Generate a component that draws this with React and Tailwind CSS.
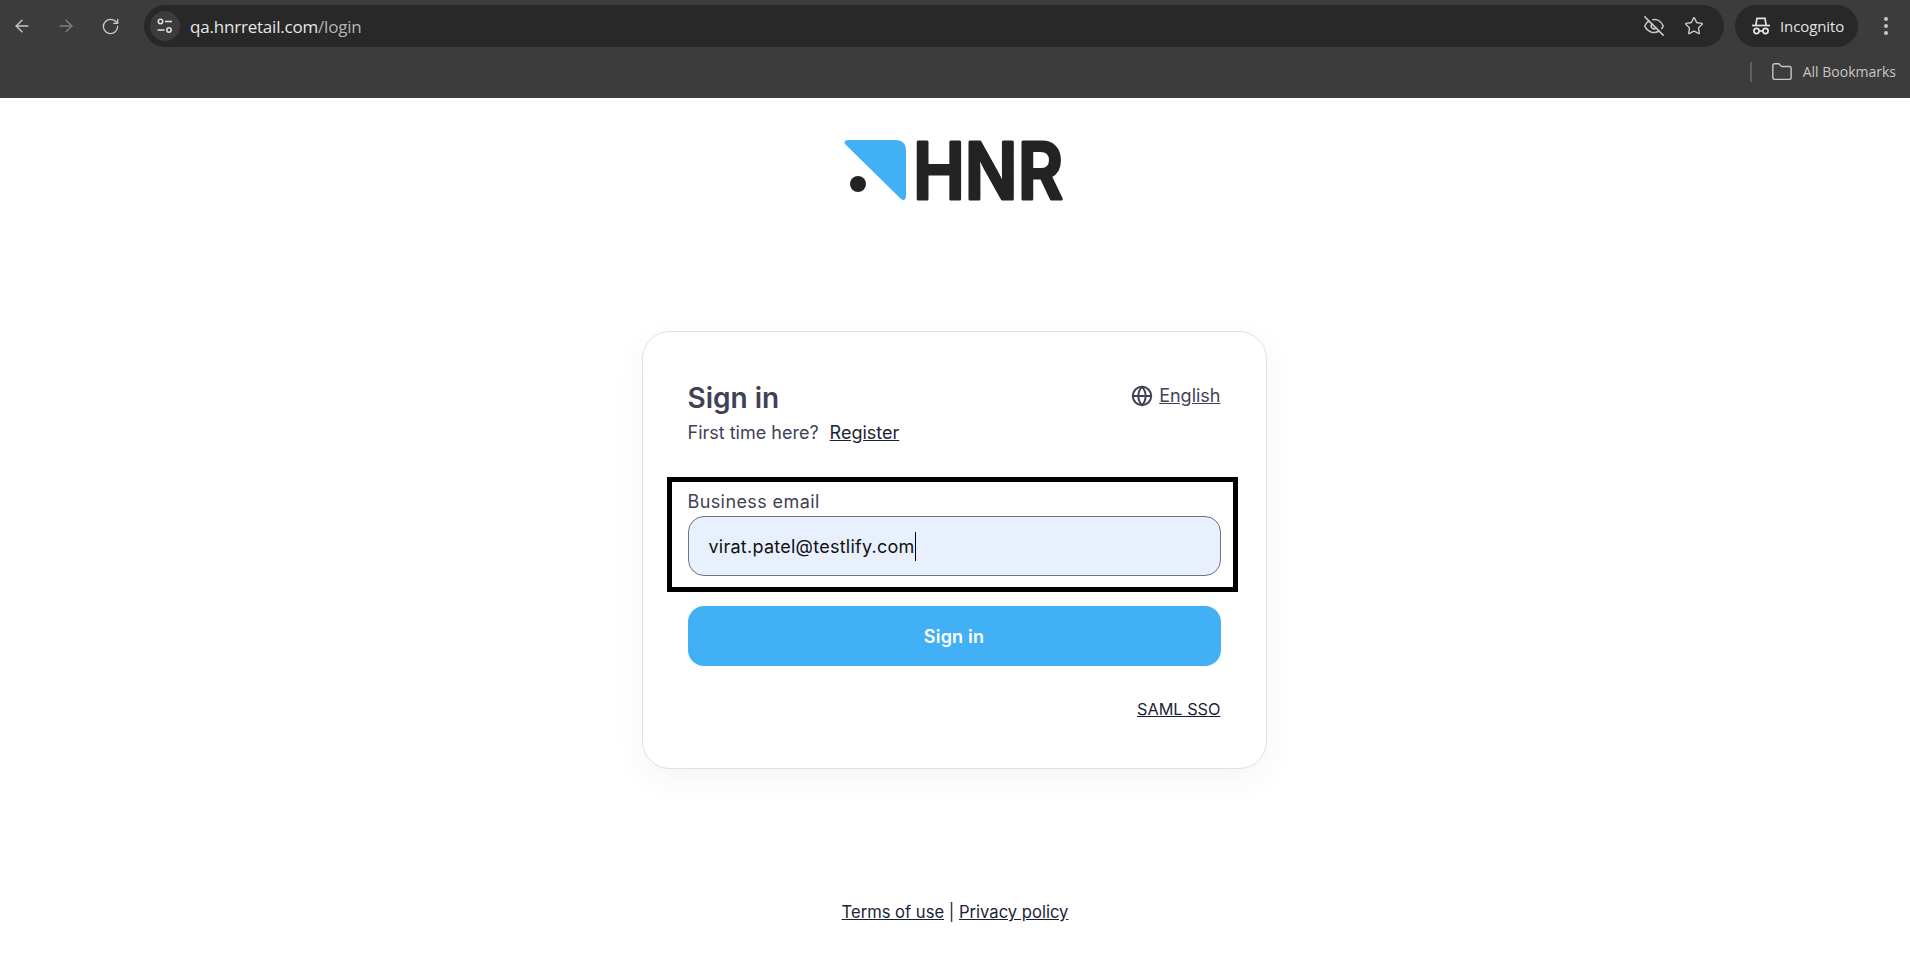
import React from "react";
import { ArrowLeft, ArrowRight, RotateCw, EyeOff, Star, Folder, Globe } from "lucide-react";

const chromeFont = { fontFamily: '"Open Sans","Noto Sans",sans-serif' };

function TuneIcon() {
  return (
    <svg width="18" height="18" viewBox="0 0 18 18" fill="none" stroke="#dcdcdc" strokeWidth="1.6">
      <circle cx="4.5" cy="4.5" r="2.2" />
      <path d="M9 4.5h7" />
      <path d="M1.5 13h7" />
      <circle cx="13" cy="13" r="2.2" />
    </svg>
  );
}

function IncognitoIcon() {
  return (
    <svg width="20" height="18" viewBox="0 0 20 18" fill="none" stroke="#e3e3e3" strokeWidth="1.7">
      <path d="M4.8 8.5 6 1.4h8l1.2 7.1" />
      <path d="M1 8.5h18" />
      <circle cx="5.5" cy="14" r="2.6" />
      <circle cx="14.5" cy="14" r="2.6" />
      <path d="M8.1 14h3.8" />
    </svg>
  );
}

function Logo() {
  return (
    <svg width="240" height="64" viewBox="0 0 240 64" className="block overflow-visible">
      <path d="M2 5 Q0 1 6 1 L52 1 Q63 1 63 12 L63 56 Q63 63 58 60 Z" fill="#42b0f5" />
      <circle cx="15" cy="45" r="8" fill="#232323" />
      <text
        x="70"
        y="60"
        fill="#232323"
        stroke="#232323"
        strokeWidth="3"
        strokeLinejoin="round"
        fontFamily="Inter, sans-serif"
        fontWeight="600"
        fontSize="78"
        textLength="150"
        lengthAdjust="spacingAndGlyphs"
      >
        HNR
      </text>
    </svg>
  );
}

export default function App() {
  return (
    <div className="min-h-[967px] bg-white flex flex-col" style={{ fontFamily: 'Inter, "Open Sans", sans-serif' }}>
      <header className="h-[98px] bg-[#3c3c3c] flex flex-col" style={chromeFont}>
        <div className="h-[51px] flex items-center pt-[1px]">
          <div className="w-[144px] flex items-center shrink-0">
            <ArrowLeft size={20} strokeWidth={1.7} className="ml-[12px] text-[#c7c7c7]" />
            <ArrowRight size={20} strokeWidth={1.7} className="ml-[24px] text-[#7d7d7d]" />
            <RotateCw size={19} strokeWidth={1.7} className="ml-[25px] text-[#c7c7c7]" />
          </div>
          <div className="w-[1580px] h-[42px] bg-[#282828] rounded-full flex items-center pl-[6px] pr-[14px]">
            <div className="w-[30px] h-[30px] rounded-full bg-[#3c3c3c] flex items-center justify-center">
              <TuneIcon />
            </div>
            <div className="ml-[10px] text-[17px] leading-none tracking-[-0.2px] text-[#e6e6e6]">
              qa.hnrretail.com<span className="text-[#b4b4b4]">/login</span>
            </div>
            <EyeOff size={22} strokeWidth={1.7} className="ml-auto text-[#c7c7c7]" />
            <Star size={20} strokeWidth={1.7} className="ml-[19px] mr-[6px] text-[#c7c7c7]" />
          </div>
          <div className="ml-[11px] w-[123px] h-[42px] rounded-full bg-[#282828] flex items-center pl-[16px]">
            <IncognitoIcon />
            <span className="ml-[9px] text-[15px] text-[#e3e3e3] tracking-[-0.1px]">Incognito</span>
          </div>
          <div className="ml-[26px] flex flex-col gap-[3px]">
            <span className="w-[4px] h-[4px] rounded-full bg-[#c7c7c7]" />
            <span className="w-[4px] h-[4px] rounded-full bg-[#c7c7c7]" />
            <span className="w-[4px] h-[4px] rounded-full bg-[#c7c7c7]" />
          </div>
        </div>
        <div className="flex-1 flex items-center justify-end pr-[14px] pb-[6px]">
          <span className="w-[2px] h-[20px] bg-[#5f5f5f]" />
          <Folder size={22} strokeWidth={1.5} className="ml-[19px] text-[#c7c7c7]" />
          <span className="ml-[10px] text-[14px] text-[#c7c7c7]">All Bookmarks</span>
        </div>
      </header>

      <main className="flex-1 flex flex-col items-center">
        <div className="mt-[41px] ml-[16px]">
          <Logo />
        </div>

        <section className="mt-[128px] ml-[-2px] w-[625px] h-[438px] border border-[#dde1e8] rounded-[28px] bg-white pl-[45px] pr-[45px] pt-[46px] shadow-[0_10px_30px_rgba(60,60,80,0.05)]">
          <div className="flex items-start justify-between">
            <div>
              <h1 className="text-[28px] leading-[40px] font-semibold text-[#3f4156]">Sign in</h1>
              <p className="mt-[2px] text-[18px] leading-[26px] text-[#3f4156]">
                First time here?
                <a className="ml-[11px] underline text-[#1d1f36]">Register</a>
              </p>
            </div>
            <div className="flex items-center mt-[5px] gap-[6px]">
              <Globe size={22} strokeWidth={2.2} className="text-[#3f4156]" />
              <a className="text-[18px] leading-[26px] underline text-[#3f4156]">English</a>
            </div>
          </div>

          <div className="mt-[31px] ml-[-21px] mr-[-17px] h-[115px] border-[5px] border-black pl-[16px] pr-[12px] pt-[8px]">
            <label className="block text-[18px] leading-[24px] tracking-[0.4px] text-[#3f4156]">Business email</label>
            <div className="mt-[2px] h-[60px] rounded-[16px] border border-[#6d7285] bg-[#e8f0fe] pl-[20px] flex items-center text-[18px] tracking-[0.25px] text-[#111111]">
              virat.patel@testlify.com
              <span className="w-[1px] h-[29px] bg-black" />
            </div>
          </div>

          <button className="mt-[14px] w-full h-[60px] rounded-[16px] bg-[#42b0f5] text-white text-[18px] tracking-[0.2px] font-semibold flex items-center justify-center">
            Sign in
          </button>

          <div className="mt-[30px] flex justify-end">
            <a className="text-[16.3px] leading-[26px] underline text-[#1d1f36]">SAML SSO</a>
          </div>
        </section>

        <footer className="mt-[130px] text-[16.6px] leading-[26px] text-[#1d1f36]">
          <a className="underline">Terms of use</a> | <a className="underline">Privacy policy</a>
        </footer>
      </main>
    </div>
  );
}
